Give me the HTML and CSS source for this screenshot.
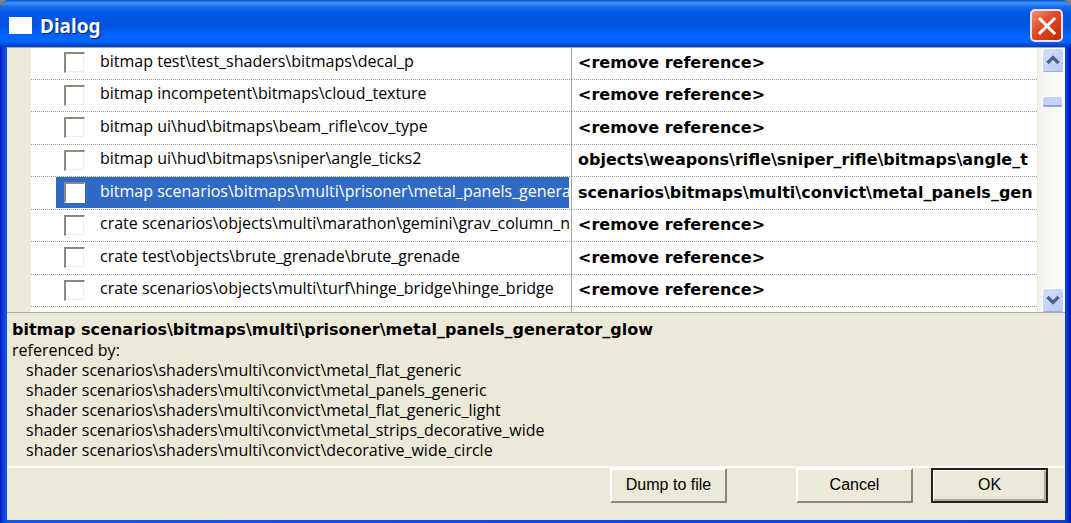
FILE: index.html
```html
<!DOCTYPE html>
<html lang="en">
<head>
<meta charset="utf-8">
<title>Dialog</title>
<link rel="stylesheet" href="styles.css">
</head>
<body>
<main class="window">
  <header class="titlebar">
    <span class="app-icon"></span>
    <h1 class="title">Dialog</h1>
    <button class="close" type="button" aria-label="Close">
      <svg width="20" height="20" viewBox="0 0 20 20"><path d="M3 3L17 17M17 3L3 17" stroke="#fff" stroke-width="3" stroke-linecap="square"/></svg>
    </button>
  </header>
  <div class="client">
    <section class="list">
      <div class="gutter"></div>
      <div class="viewport">
        <table class="refs">
          <tbody>
            <tr><td class="name"><label class="item"><input type="checkbox" class="tick"><span>bitmap test\test_shaders\bitmaps\decal_p</span></label></td><td class="value">&lt;remove reference&gt;</td></tr>
            <tr><td class="name"><label class="item"><input type="checkbox" class="tick"><span>bitmap incompetent\bitmaps\cloud_texture</span></label></td><td class="value">&lt;remove reference&gt;</td></tr>
            <tr><td class="name"><label class="item"><input type="checkbox" class="tick"><span>bitmap ui\hud\bitmaps\beam_rifle\cov_type</span></label></td><td class="value">&lt;remove reference&gt;</td></tr>
            <tr><td class="name"><label class="item"><input type="checkbox" class="tick"><span>bitmap ui\hud\bitmaps\sniper\angle_ticks2</span></label></td><td class="value">objects\weapons\rifle\sniper_rifle\bitmaps\angle_t</td></tr>
            <tr><td class="name"><label class="item selected"><input type="checkbox" class="tick"><span>bitmap scenarios\bitmaps\multi\prisoner\metal_panels_generat</span></label></td><td class="value">scenarios\bitmaps\multi\convict\metal_panels_gen</td></tr>
            <tr><td class="name"><label class="item"><input type="checkbox" class="tick"><span>crate scenarios\objects\multi\marathon\gemini\grav_column_no</span></label></td><td class="value">&lt;remove reference&gt;</td></tr>
            <tr><td class="name"><label class="item"><input type="checkbox" class="tick"><span>crate test\objects\brute_grenade\brute_grenade</span></label></td><td class="value">&lt;remove reference&gt;</td></tr>
            <tr><td class="name"><label class="item"><input type="checkbox" class="tick"><span>crate scenarios\objects\multi\turf\hinge_bridge\hinge_bridge</span></label></td><td class="value">&lt;remove reference&gt;</td></tr>
          </tbody>
        </table>
        <div class="rest"></div>
      </div>
      <div class="scrollbar">
        <button class="arrow" type="button" aria-label="Scroll up"><svg width="14" height="10" viewBox="0 0 14 10"><path d="M1.5 8L7 2.5L12.500 8" fill="none" stroke="#4d6185" stroke-width="3.2"/></svg></button>
        <div class="track"><div class="thumb"></div></div>
        <button class="arrow" type="button" aria-label="Scroll down"><svg width="14" height="10" viewBox="0 0 14 10"><path d="M1.500 2L7 7.500L12.500 2" fill="none" stroke="#4d6185" stroke-width="3.2"/></svg></button>
      </div>
    </section>
    <section class="details">
      <h2 class="subject">bitmap scenarios\bitmaps\multi\prisoner\metal_panels_generator_glow</h2>
      <p class="caption">referenced by:</p>
      <ul class="sources">
        <li>shader scenarios\shaders\multi\convict\metal_flat_generic</li>
        <li>shader scenarios\shaders\multi\convict\metal_panels_generic</li>
        <li>shader scenarios\shaders\multi\convict\metal_flat_generic_light</li>
        <li>shader scenarios\shaders\multi\convict\metal_strips_decorative_wide</li>
        <li>shader scenarios\shaders\multi\convict\decorative_wide_circle</li>
      </ul>
    </section>
    <footer class="actions">
      <button class="btn dump" type="button">Dump to file</button>
      <button class="btn" type="button">Cancel</button>
      <button class="btn default" type="button">OK</button>
    </footer>
  </div>
</main>
</body>
</html>
```

FILE: styles.css
```css
* { box-sizing: border-box; }
body {
  margin: 0;
  background: #8a7f70;
  font: 16px/20px "Open Sans", sans-serif;
  color: #000;
}
h1, h2, p, ul { margin: 0; padding: 0; }
.window {
  display: flex;
  flex-direction: column;
  min-height: 100vh;
  padding: 0 6px 3px 7px;
  border-radius: 9px 9px 0 0;
  background: linear-gradient(90deg, #0019c4, #0b49e0 4px, #1557e6 7px, #0a3fdc calc(100% - 5px), #0014a8);
}
.titlebar {
  display: flex;
  align-items: center;
  height: 47px;
  margin: 0 -6px 0 -7px;
  padding: 4px 8px 0 9px;
  border-radius: 9px 9px 0 0;
  background: linear-gradient(#0a50c8, #3c94fc 3px, #1768ea 7px, #0056e4 13px, #0054e3 26px, #0066ff 36px, #0064fa 42px, #0040c8 46px);
}
.app-icon {
  width: 23px;
  height: 17px;
  margin-right: 8px;
  background: #fff;
}
.title {
  flex: 1;
  color: #fff;
  font: bold 19px/24px "Noto Sans", sans-serif;
  text-shadow: 1px 1px 1px #0a1883;
}
.close {
  display: flex;
  align-items: center;
  justify-content: center;
  width: 33px;
  height: 33px;
  padding: 0;
  border: 2px solid #e8e4f4;
  border-radius: 5px;
  background: linear-gradient(135deg, #f09070, #e04a22 45%, #b82c08);
}
.client {
  flex: 1;
  display: flex;
  flex-direction: column;
  background: #ece9d8;
  border-bottom: 1px solid #d8ecff;
}
.list {
  display: grid;
  grid-template-columns: 24px minmax(0, 1fr) 28px;
  height: 266px;
  border-top: 1px solid #aca899;
  border-bottom: 1px solid #aca899;
  background: #fff;
}
.gutter { background: #ece9d8; }
.viewport {
  display: flex;
  flex-direction: column;
  overflow: hidden;
}
.refs {
  width: 100%;
  height: 260px;
  margin-top: -1px;
  table-layout: fixed;
  border-collapse: separate;
  border-spacing: 0;
}
.refs td {
  padding: 0;
  border-bottom: 1px dotted #999;
  white-space: nowrap;
  overflow: hidden;
}
.refs .name {
  width: 541px;
  padding: 0 2px 0 25px;
  border-right: 1px solid #aca899;
}
.refs .value {
  padding: 0 0 0 6px;
  font-family: "DejaVu Sans", sans-serif;
  font-weight: bold;
}
.item {
  display: flex;
  align-items: center;
  gap: 15px;
  height: 31px;
  padding-left: 8px;
  overflow: hidden;
}
.item span { padding-bottom: 4px; }
.selected {
  background: #316ac5;
  color: #fff;
}
.tick {
  appearance: none;
  flex: none;
  width: 21px;
  height: 21px;
  margin: 0;
  border: 1px solid #fff;
  border-top: 2px solid #8c8a80;
  border-left: 2px solid #8c8a80;
  background: #fff;
}
.item:not(.selected) .tick { box-shadow: inset -1px -1px #f1efe4; }
.rest {
  flex: 1;
  width: 541px;
  border-right: 1px solid #aca899;
}
.scrollbar {
  display: flex;
  flex-direction: column;
  padding-left: 4px;
  border-left: 1px solid #eeede5;
  background: linear-gradient(90deg, #f3f1ec, #fefefb);
}
.arrow {
  display: flex;
  align-items: center;
  justify-content: center;
  width: 22px;
  height: 24px;
  padding: 0;
  border: 1px solid #fff;
  border-bottom: 1px solid #9fb0d8;
  border-radius: 3px;
  background: linear-gradient(135deg, #d4dffd, #b5c8f6);
}
.track {
  flex: 1;
  padding-top: 24px;
}
.thumb {
  width: 21px;
  height: 11px;
  border: 1px solid #fff;
  border-bottom: 2px solid #8fa6d8;
  border-radius: 3px;
  background: #c2d2fb;
}
.details {
  flex: 1;
  padding: 7px 5px 6px;
  border-bottom: 2px solid #faf9f4;
}
.subject {
  font: bold 16px/20px "DejaVu Sans", sans-serif;
}
.sources {
  padding-left: 14px;
  list-style: none;
}
.actions {
  display: flex;
  justify-content: flex-end;
  height: 51px;
  padding-right: 17px;
}
.btn {
  width: 117px;
  height: 35px;
  margin-left: 18px;
  padding: 0 0 2px;
  border: 2px solid;
  border-color: #fff #8a8676 #8a8676 #fff;
  background: #ece9d8;
  color: #000;
  font: 16px/20px "Liberation Sans", Arial, sans-serif;
}
.dump { margin-right: 51px; }
.default {
  border-color: #222;
  box-shadow: inset 1px 1px #fff, inset -2px -2px #aca899;
}
```
